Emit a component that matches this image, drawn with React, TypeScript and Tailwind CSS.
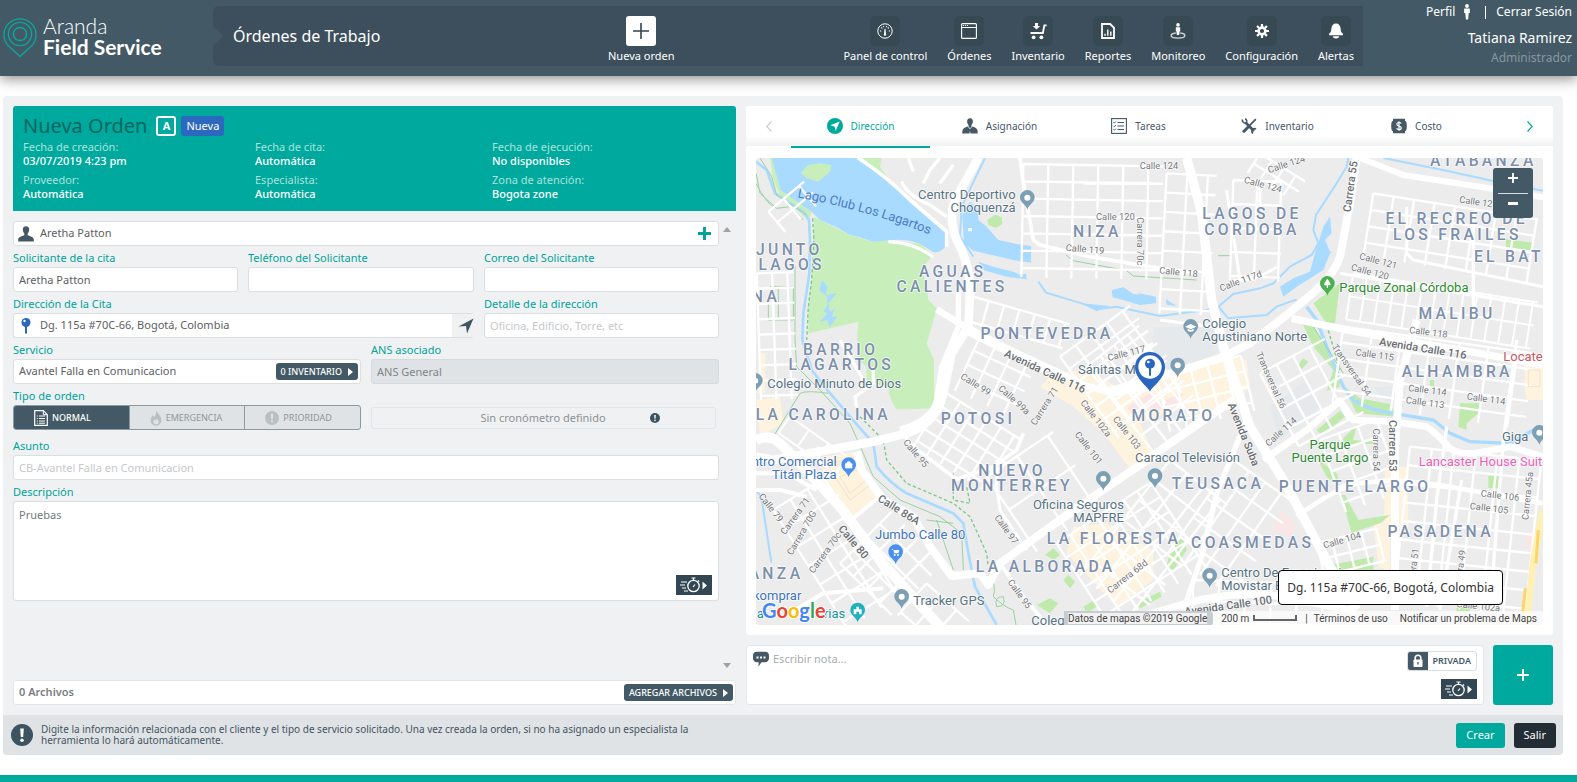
import React, { useState } from "react";

/* ------------------------------------------------------------------ icons */

type IconProps = { className?: string };

const LogoPin = () => (
  <svg viewBox="0 0 34 41" className="h-[41px] w-[34px] shrink-0" fill="none" stroke="#0ba79d" strokeWidth="1.3">
    <path d="M17 39.5 5.2 28.6A16 16 0 1 1 28.8 28.6Z" />
    <circle cx="17" cy="17" r="11.6" />
    <circle cx="17" cy="17" r="6.6" strokeWidth="1.5" />
  </svg>
);

const GaugeIcon = () => (
  <svg viewBox="0 0 16 16" className="h-4 w-4" fill="none" stroke="#fff">
    <circle cx="8" cy="8" r="7.2" strokeWidth="1" />
    <path d="M3 8h1.200M11.800 8H13M4.300 4.500l.9.900M11.700 4.500l-.9.900M6.300 3.200l.3 1M9.700 3.200l-.3 1" strokeWidth="1.100" />
    <path d="M7.500 5.800h1l.5 5.100a1.200 1.200 0 1 1-2 0Z" fill="#fff" stroke="none" />
  </svg>
);
const WindowIcon = () => (
  <svg viewBox="0 0 16 16" className="h-4 w-4" fill="none" stroke="#fff">
    <rect x=".6" y=".6" width="14.8" height="14.8" rx="1" strokeWidth="1.1" />
    <path d="M.6 4.5h14.8" />
    <path d="M2 2.5h1M4 2.5h1M6 2.5h1" />
  </svg>
);
const CartIcon = () => (
  <svg viewBox="0 0 17 17" className="h-[17px] w-[17px]" fill="#fff">
    <path d="M5 0h3v3h2.2L6.5 6.4 2.8 3H5Z" />
    <path d="M.5 9h11.6L13.600 1.500h3v1.700h-1.500L13.600 11H.5Z" />
    <circle cx="3.6" cy="14.3" r="1.9" />
    <circle cx="11.4" cy="14.3" r="1.9" />
  </svg>
);
const ReportIcon = () => (
  <svg viewBox="0 0 16 16" className="h-4 w-4" fill="none" stroke="#fff" strokeWidth="1.8">
    <path d="M2 1h8.2L14 4.8V15H2Z" />
    <path d="M5 12.8v-2M7.8 12.8V6.5M10.8 12.8V8.6" strokeWidth="1.4" />
  </svg>
);
const MonitorIcon = () => (
  <svg viewBox="0 0 16 16" className="h-4 w-4" fill="#fff">
    <circle cx="8" cy="1.9" r="1.8" />
    <path d="M5.8 4.2h4.4v4H9.600L9.200 12H6.800l-.4-3.800h-.6Z" />
    <path d="M5.8 10C2.6 10.3 1.1 11.4 1.1 12.5c0 1.5 3 2.6 6.9 2.6s6.9-1.100 6.900-2.600c0-1.100-1.500-2.200-4.700-2.500" fill="none" stroke="#cfd6da" strokeWidth="1.300" />
  </svg>
);
const GearIcon = () => (
  <svg viewBox="0 0 16 16" className="h-4 w-4" stroke="#fff" fill="none">
    <circle cx="8" cy="8" r="3.400" strokeWidth="2.600" />
    <path d="M8 1v3M8 12v3M1 8h3M12 8h3M3.050 3.050l2 2M10.900 10.900l2 2M3.050 12.950l2-2M10.900 5.050l2-2" strokeWidth="2.200" />
  </svg>
);
const BellIcon = () => (
  <svg viewBox="0 0 16 16" className="h-4 w-4" fill="#fff">
    <path d="M8 .5c2.900 0 4.300 2 4.600 5 .2 2.600.7 4 2.300 5.300v1.400H1.100v-1.400C2.700 9.500 3.200 8.100 3.400 5.500c.3-3 1.700-5 4.600-5Z" />
    <path d="M4.600 13.300h6.800c-.6 1.500-1.700 2.200-3.400 2.200s-2.800-.7-3.400-2.200Z" />
  </svg>
);
const PersonStanding = () => (
  <svg viewBox="0 0 8 16" className="h-4 w-2" fill="#fff">
    <circle cx="4" cy="2" r="1.900" />
    <path d="M1.200 4.500h5.600L6.900 9H5.700l-.6 6.500H2.900L2.300 9H1.100Z" />
  </svg>
);
const UserIcon = ({ className = "h-4 w-4" }: IconProps) => (
  <svg viewBox="0 0 16 16" className={className} fill="#465766">
    <path d="M8 .3c2.200 0 3.300 1.500 3.200 3.500-.1 1.500-.7 2.800-1.500 3.600v1.900c2.200 1 5.900 1.300 6.100 4.300v1.900H.2v-1.900c.2-3 3.900-3.300 6.100-4.300V7.400C5.500 6.600 4.900 5.300 4.800 3.800 4.700 1.800 5.800.3 8 .3Z" />
  </svg>
);
const SuitUserIcon = () => (
  <svg viewBox="0 0 16 16" className="h-4 w-4" fill="#465766">
    <path d="M8 .2c2 0 3 1.400 2.900 3.400-.1 1.500-.6 2.600-1.400 3.400v1.500L8 10.400 6.500 8.500V7C5.700 6.200 5.200 5.100 5.100 3.600 5 1.600 6 .2 8 .2Z" />
    <path d="M5.600 8.600 8 11.300l2.400-2.700c3 .9 5.100 1.900 5.300 4.900v2H8.500L8 12.700l-.5 2.800H.3v-2c.2-3 2.300-4 5.300-4.900Z" />
  </svg>
);
const CompassIcon = () => (
  <svg viewBox="0 0 16 16" className="h-4 w-4">
    <circle cx="8" cy="8" r="8" fill="#00a99d" />
    <path d="m12.700 3.400-4 9.300-1.200-4.200-4.200-1.200Z" fill="#fff" />
  </svg>
);
const ListIcon = () => (
  <svg viewBox="0 0 16 16" className="h-4 w-4" fill="none" stroke="#465766">
    <rect x=".6" y=".6" width="14.800" height="14.800" strokeWidth="1.100" />
    <path d="M6.500 4.500h6.500M6.500 8h6.500M6.500 11.500h6.500" strokeWidth="1.100" />
    <path d="m2.500 4.300.8.900L4.900 3.500M2.500 7.900l.8.900 1.600-1.700M2.500 11.400l.8.900 1.600-1.700" strokeWidth=".9" />
  </svg>
);
const ToolsIcon = () => (
  <svg viewBox="0 0 16 16" className="h-4 w-4" fill="none" stroke="#465766">
    <path d="M4.500 4.500 13 13" strokeWidth="2.600" />
    <path d="M1.500 1.500a3 3 0 0 0 3.600 3.600M4.200.7a3 3 0 0 1 .9 4.400M15 11.200a3 3 0 0 0-3.600.2M11.300 11.800a3 3 0 0 0 .6 3.700" strokeWidth="1.600" />
    <path d="M14.800 1.200 8.700 7.300" strokeWidth="1.700" />
    <path d="M7.500 8.700 2 14.200" strokeWidth="3" />
  </svg>
);
const CostIcon = () => (
  <svg viewBox="0 0 16 16" className="h-4 w-4">
    <path d="M2 .8h12v2c1.300 0 1.800 2.300 1.800 5.200s-.5 5.200-1.800 5.200v2H2v-2C.7 13.200.2 10.900.2 8S.7 2.800 2 2.800Z" fill="#465766" />
    <path d="M10.200 5.600C9.800 4.800 9 4.500 8 4.500c-1.200 0-2.200.6-2.200 1.700 0 2.500 4.500 1.200 4.500 3.700 0 1.100-1 1.700-2.300 1.700-1.100 0-2-.4-2.400-1.300M8 3.200v9.600" fill="none" stroke="#fff" strokeWidth="1.200" />
  </svg>
);
const SendIcon = () => (
  <svg viewBox="0 0 16 16" className="h-4 w-4">
    <path d="M15.500.5 9 15.500 8 8 .5 8.500Z" fill="#3f5562" />
  </svg>
);
const PushPinIcon = ({ className = "h-4 w-3" }: IconProps) => (
  <svg viewBox="0 0 12 16" className={className}>
    <circle cx="6" cy="4.500" r="4.500" fill="#2a66bd" />
    <path d="M5 8h2v7.500H5Z" fill="#2a66bd" />
    <circle cx="4.500" cy="3" r="1.200" fill="#fff" />
  </svg>
);
const DocIcon = () => (
  <svg viewBox="0 0 14 16" className="h-4 w-3.5" fill="none" stroke="#fff">
    <path d="M.7.7h8.600l4 4v10.600H.7Z" strokeWidth="1.200" />
    <path d="M9.300.7v4h4" />
    <path d="M2.800 6h1M5 6h6M2.800 8.500h1M5 8.500h6M2.800 11h1M5 11h6M2.800 13.200h1M5 13.200h6" />
  </svg>
);
const FlameIcon = () => (
  <svg viewBox="0 0 12 16" className="h-4 w-3">
    <path d="M6.500.3c.4 3 4.900 5.200 4.900 9.700 0 3.300-2.200 5.700-5.400 5.700S.6 13.300.6 10.300C.6 8 2 7 2.500 5.200c1 .6 1.400 1.300 1.500 2.200C5.400 5.600 6.300 3.200 6.500.3Z" fill="#b9c0c4" />
    <path d="M6 14.300c-1.700 0-2.800-1-2.800-2.500 0-1.200.9-1.700 1.100-2.600.9.500 1.100 1 1.200 1.500.6-.6.9-1.300.9-2.100 1.300.8 2.400 2 2.400 3.300 0 1.500-1.100 2.400-2.800 2.400Z" fill="#dfe3e6" />
  </svg>
);
const ExclaimIcon = ({ className = "h-3.5 w-3.5", disc = "#3d5361", mark = "#fff" }: { className?: string; disc?: string; mark?: string }) => (
  <svg viewBox="0 0 22 22" className={className}>
    <circle cx="11" cy="11" r="11" fill={disc} />
    <path d="M9.200 4.500h3.600l-.6 8.400H9.800Z" fill={mark} />
    <circle cx="11" cy="16.300" r="1.800" fill={mark} />
  </svg>
);
const StopwatchIcon = () => (
  <svg viewBox="0 0 28 16" className="h-4 w-7" fill="none" stroke="#fff">
    <path d="M1 5h6M0 8h5M2 11h4M4 14h4" strokeWidth="1.100" />
    <circle cx="13.500" cy="9" r="5.700" strokeWidth="1.300" />
    <path d="M11.500 1h4M13.500 1v2M18 3.500l1.200 1.200M13 10l2-2.500" strokeWidth="1.200" />
    <path d="M22.500 4.500v8l4.500-4Z" fill="#fff" stroke="none" />
  </svg>
);
const ChatIcon = () => (
  <svg viewBox="0 0 16 16" className="h-4 w-4">
    <path d="M4 .8h8c2.500 0 4 1.500 4 3.900v2.600c0 2.400-1.500 3.900-4 3.900H8.500L5.500 15.500l.2-4.300H4c-2.500 0-4-1.500-4-3.900V4.700C0 2.300 1.500.8 4 .8Z" fill="#465766" />
    <path d="M3.500 5.500h2v2h-2ZM7 5.500h2v2H7ZM10.500 5.500h2v2h-2Z" fill="#fff" />
  </svg>
);
const LockIcon = () => (
  <svg viewBox="0 0 12 14" className="h-3.5 w-3">
    <path d="M3.200 6V4a2.800 2.800 0 0 1 5.600 0v2" fill="none" stroke="#fff" strokeWidth="1.600" />
    <rect x="1.500" y="5.500" width="9" height="7.500" rx=".8" fill="#fff" />
    <path d="M6 8v2.500" stroke="#435a66" strokeWidth="1.300" />
  </svg>
);
const Caret = () => (
  <svg viewBox="0 0 5 8" className="h-2 w-[5px]">
    <path d="M0 0 5 4 0 8Z" fill="#fff" />
  </svg>
);
const Chevron = ({ left, color }: { left?: boolean; color: string }) => (
  <svg viewBox="0 0 6 11" className="h-[11px] w-1.5" fill="none" stroke={color} strokeWidth="1.200">
    <path d={left ? "M5.500.5.800 5.500l4.700 5" : "M.5.500l4.700 5L.5 10.500"} />
  </svg>
);
const PlusIcon = ({ className, color, weight }: { className: string; color: string; weight: number }) => (
  <svg viewBox="0 0 16 16" className={className} stroke={color} strokeWidth={weight}>
    <path d="M8 0v16M0 8h16" />
  </svg>
);

/* -------------------------------------------------------------------- map */

/* Streets of one neighbourhood: two sets of parallel lines, turned by a given angle. */
function Blocks({ x, y, w, h, a, dx, dy, sw = 7 }: { x: number; y: number; w: number; h: number; a: number; dx: number; dy: number; sw?: number }) {
  let d = "";
  for (let i = 0; i <= w; i += dx) d += `M${i} 0V${h}`;
  for (let j = 0; j <= h; j += dy) d += `M0 ${j}H${w}`;
  return <path d={d} transform={`translate(${x} ${y}) rotate(${a})`} strokeWidth={sw} />;
}

function Pin({ x, y, color, hole = true, children }: { x: number; y: number; color: string; hole?: boolean; children?: React.ReactNode }) {
  return (
    <g transform={`translate(${x} ${y})`}>
      <path d="M0 36C-4 20-22 16-22-1A22 22 0 0 1 22-1C22 16 4 20 0 36Z" fill={color} />
      {hole && <circle r="9" fill="#fff" />}
      {children}
    </g>
  );
}

type Label = [string, number, number, number?];

const AREAS: Label[] = [
  ["JUNTO", 148, 346], ["LAGOS", 155, 391], ["NA", 78, 487], ["AGUAS", 638, 412], ["CALIENTES", 636, 457],
  ["NIZA", 1072, 292], ["PONTEVEDRA", 921, 596], ["BARRIO", 302, 646], ["LAGARTOS", 304, 691],
  ["LAGOS DE", 1536, 238], ["CORDOBA", 1536, 284], ["ATABANZA", 2230, 79], ["EL RECREO DE", 2150, 253], ["LOS FRAILES", 2152, 299],
  ["EL BATAN", 2348, 367], ["MALIBU", 2151, 538], ["ALHAMBRA", 2152, 712],
  ["LA CAROLINA", 250, 841], ["POTOSI", 714, 853], ["NUEVO", 816, 1009], ["MONTERREY", 816, 1054],
  ["LA FLORESTA", 1122, 1211], ["LA ALBORADA", 917, 1297], ["ANZA", 108, 1317], ["MORATO", 1300, 844],
  ["TEUSACA", 1434, 1046], ["PUENTE LARGO", 1845, 1055], ["COASMEDAS", 1538, 1223], ["PASADENA", 2102, 1192],
];

const STREETS: Label[] = [
  ["Calle 124", 1257, 87], ["Calle 120", 1126, 240], ["Calle 119", 1035, 331, 5], ["Carrera 70c", 1196, 304, 90],
  ["Calle 117", 1160, 643, -14], ["Calle 99", 705, 736, 32], ["Calle 124", 1568, 137, 15], ["Calle 124", 1640, 76, -18], ["Calle 118", 1315, 400, 6],
  ["Calle 117d", 1503, 426, -20], ["Calle 126", 2215, 190, 8], ["Calle 121", 1914, 366, 15], ["Calle 120", 1889, 399, 15],
  ["Calle 118", 2065, 580, 7], ["Calle 115", 1904, 648, 8], ["Calle 114", 2062, 754, 7], ["Calle 114", 2238, 780, 8], ["Transversal 54", 1832, 692, 55],
  ["Transversal 56", 1590, 722, 66], ["Calle 95", 525, 942, 50], ["Calle 99a", 820, 782, 42], ["Carrera 71", 916, 800, -58],
  ["Calle 102a", 1065, 837, 52], ["Calle 103", 1158, 880, 52], ["Calle 101", 1043, 926, 52], ["Calle 79", 90, 1105, 52], ["Carrera 71", 168, 1130, -54],
  ["Carrera 70G", 188, 1180, -60], ["Carrera 70c", 258, 1240, -54], ["Calle 97", 796, 1170, 54], ["Calle 95", 836, 1364, 54],
  ["Carrera 68d", 1164, 1312, -38], ["Calle 114", 1625, 878, -42], ["Carrera 54", 1906, 930, 90], ["Calle 113", 2055, 791, 8],
  ["Calle 106", 2280, 1070, 7], ["Calle 105", 2247, 1108, 7], ["Carrera 45a", 2366, 1068, -84], ["Calle 104", 1807, 1204, -16],
  ["Carrera 51", 2022, 1290, -82], ["Carrera 49", 2162, 1295, -82], ["Calle 102a", 2215, 1402, 6],
];

const AVENUES: Label[] = [
  ["Avenida Calle 116", 914, 697, 25], ["Avenida Calle 116", 2048, 628, 9], ["Carrera 55", 1834, 140, -82],
  ["Calle 86A", 475, 1112, 32], ["Calle 80", 338, 1208, 50], ["Avenida Suba", 1508, 884, 68], ["Carrera 53", 1956, 917, 90], ["Avenida Calle 100", 1465, 1400, -8],
];

function StreetMap() {
  return (
    <svg viewBox="48 54 2361 1401" preserveAspectRatio="xMidYMid slice" className="block h-full w-full font-['Roboto',sans-serif]" role="img" aria-label="Mapa de Bogotá">
      <rect x="-400" y="-400" width="3400" height="2400" fill="#ececec" />

      {/* shaded districts */}
      <path d="M1240 560 1430 560 1430 660 1240 700ZM1590 800 1700 720 1740 800 1620 900ZM1900 740 2000 740 1980 840Z" fill="#e6e9ec" />
      <g fill="#fdf3df">
        <path d="M940 700 1040 690 1130 740 1300 690 1440 640 1520 660 1530 740 1480 790 1330 800 1200 850 1250 960 1180 1000 1090 880 1000 800 900 740Z" />
        <path d="M1330 720H1530L1500 780 1340 830ZM250 950 340 935 420 1060 340 1140 250 1040ZM48 780 120 770 130 850 60 890Z" />
        <path d="M60 640 76 640V760H50ZM1000 1160 1100 1150 1240 1230 1240 1320 1130 1400 980 1240ZM1935 980H2005V1180H1950V1290H1930Z" />
        <path d="M2350 660 2409 640V760H2360ZM2350 720H2409V780H2360ZM1900 1150 1945 1150 1950 1290 1915 1280Z" />
      </g>
      <path d="M1596 1170 1625 1110 1670 1160 1650 1190ZM1160 800 1230 760 1260 800 1180 830ZM2350 1180 2380 1170V1230H2365ZM1240 790 1330 760 1310 800 1250 810Z" fill="#fae6e6" />

      {/* parks */}
      <g fill="#c8efbb">
        <path d="M90 54H100L125 150 215 215 205 240 120 165 100 120ZM345 54H425L420 82Q445 110 455 140L430 130 390 90Z" />
        <path d="M222 232 240 240 330 285 400 305 450 300 540 312 580 345 545 385 560 440 565 480 590 505 575 560 560 610 582 660V805L470 808Q448 780 445 745L380 720V680L355 660 350 620 355 545 205 580V500L215 420Z" />
      </g>
      <g fill="#bfeaac">
        <path d="M742 240 765 224 785 232 787 252 768 264 745 255ZM1720 490 1800 430 1785 550 1760 552ZM1685 545 1720 560 1795 690 1800 740 1760 752 1780 690 1720 620Z" />
        <path d="M2298 298 2378 308V332L2298 322ZM1670 680 1690 655 1705 665 1685 688ZM1760 720H1800L1850 820 1970 830 1950 792 1860 775 1800 730Z" />
        <path d="M1730 870 1800 812 1815 830 1745 886ZM1805 900 1850 855 1840 900 1905 905V912H1800ZM1735 960 1790 1000 1800 1040 1760 1010ZM1805 1065H1815L1855 1140 1950 1125 1920 1150 1835 1178 1825 1145Z" />
        <path d="M1770 1275 1900 1250V1320H1780ZM2160 790H2220V815L2180 850V870L2155 860ZM2245 1008H2280V1045H2245ZM2070 720H2082V740H2070ZM2150 1402H2190V1415H2150Z" />
        <path d="M915 1245 940 1225 960 1245 940 1260ZM970 1320 985 1305 1005 1325 990 1345ZM890 1395 930 1375 955 1390 930 1420ZM1030 1400 1060 1382 1070 1400 1040 1420ZM1190 1390 1260 1355 1265 1370 1200 1405ZM1290 1230 1330 1190 1340 1230 1300 1290 1280 1280Z" />
      </g>

      {/* water */}
      <g fill="#a9daff">
        <path d="M95 54H345L400 88 430 110 480 150 560 225 618 280V315Q605 340 580 336L540 312Q500 296 460 300L400 305 360 292 330 285 290 262 240 240 215 215 150 170 122 150 108 100Z" />
        <path d="M667 225 690 185 712 205 715 240 740 260 775 300 830 312 873 318V368L820 360 700 332 672 310ZM715 365 760 380 820 395 840 405 858 400 860 418 800 410 730 390Z" />
        <path d="M1115 450 1150 442 1180 462 1240 468 1248 490 1200 495 1150 480 1118 472ZM1025 490 1110 498 1070 514ZM1278 478 1310 498 1280 494ZM1190 458 1248 470V488Z" />
        <path d="M1770 230 1775 280 1755 300 1770 335H1778L1770 340 1750 390 1670 440 1630 470 1620 440 1660 415 1710 395 1725 340 1750 260Z" />
        <path d="M246 420 262 440 258 465 290 460 265 490 270 515 285 505 275 530 292 530 268 562 262 540 240 545 262 520 250 515 262 495 262 470 238 450Z" />
      </g>
      <path d="M182 98 205 75 240 70 275 75 270 95 235 125 200 115Z" fill="#c8efbb" />
      <path d="M684 264H696V274H684Z" fill="#fff" />
      <g fill="none" stroke="#a9daff" strokeWidth="6">
        <path d="M48 65 80 90 105 160 190 215 207 240 210 300 208 400 190 520 187 600 215 690 262 750 330 830 400 910 410 980Q450 1030 500 1060L640 1120 670 1150 685 1240 705 1340 770 1455" strokeWidth="8" />
        <path d="M735 54 665 200 660 290 700 350 M895 425 918 458 1025 490 1070 508 1130 500 1260 528 1400 510 1435 500 1480 462 1560 445 1600 430 1650 380 1715 345 1735 310 1720 270 1728 225 1790 130 1820 80 1825 54" />
        <path d="M1435 500 1465 535 1580 525 1610 500 1670 478" />
        <path d="M1700 500 1730 540 1760 620 1810 740 1840 780Q1890 812 1960 820L2080 840 2130 880 2190 905 2310 910 2380 870" strokeWidth="10" />
        <path d="M48 1055Q66 1060 70 1110L94 1268M1930 54 2120 92 2290 130 2409 152" />
      </g>

      {/* footpaths */}
      <g fill="none" stroke="#9ad2a1" strokeWidth="3">
        <path d="M60 54 95 110 110 165 200 225M48 100 60 160 110 205 150 200 190 240M48 130Q80 190 100 200M90 440H160V540H85V490H160M115 440V540M165 380V600L170 680 240 750 330 850 370 940 400 1010 480 1080 600 1130 665 1180 670 1290" />
        <path d="M978 345 1000 362 1160 392 1180 408 1370 420M1434 347H1475M265 760Q200 750 180 760L100 890M590 1140 640 1290M750 1300Q770 1340 760 1370 790 1400 820 1410L828 1455M770 1400Q760 1370 790 1370 800 1400 770 1400M1720 560 1810 700M560 1140 640 1150" />
        <path d="M218 235 222 300 215 420 205 500 200 600M360 830 430 900 440 960 500 1030 640 1090 690 1130 740 1240 745 1280M640 1000 640 1080 690 1090 680 1040M1760 555 1800 690" strokeDasharray="10 7" strokeWidth="4" stroke="#7cc98a" />
      </g>

      {/* local streets */}
      <g fill="none" stroke="#fff">
        <Blocks x={850} y={72} w={420} h={340} a={1} dx={75} dy={52} />
        <Blocks x={1280} y={100} w={150} h={420} a={3} dx={62} dy={58} />
        <Blocks x={50} y={400} w={110} h={380} a={-2} dx={46} dy={46} />
        <Blocks x={85} y={215} w={140} h={80} a={-40} dx={60} dy={42} />
        <Blocks x={700} y={470} w={300} h={75} a={16} dx={48} dy={75} />
        <Blocks x={720} y={590} w={190} h={180} a={25} dx={54} dy={46} />
        <Blocks x={620} y={760} w={260} h={190} a={32} dx={48} dy={42} />
        <Blocks x={960} y={650} w={260} h={300} a={-36} dx={58} dy={46} />
        <Blocks x={1040} y={680} w={200} h={330} a={-38} dx={52} dy={66} />
        <Blocks x={1250} y={710} w={260} h={170} a={-14} dx={52} dy={48} />
        <Blocks x={1900} y={160} w={500} h={190} a={9} dx={62} dy={50} />
        <Blocks x={1840} y={400} w={560} h={140} a={9} dx={42} dy={70} sw={6} />
        <Blocks x={1810} y={560} w={580} h={230} a={8} dx={88} dy={48} />
        <Blocks x={1480} y={120} w={150} h={300} a={2} dx={72} dy={72} />
        <Blocks x={1560} y={40} w={160} h={70} a={32} dx={42} dy={36} />
        <Blocks x={1560} y={700} w={220} h={250} a={-28} dx={56} dy={62} />
        <Blocks x={1740} y={900} w={180} h={230} a={-20} dx={60} dy={50} />
        <Blocks x={2010} y={920} w={400} h={470} a={6} dx={66} dy={56} />
        <Blocks x={1730} y={1210} w={190} h={100} a={-14} dx={46} dy={50} />
        <Blocks x={1290} y={960} w={220} h={440} a={38} dx={64} dy={76} />
        <Blocks x={1480} y={960} w={230} h={340} a={35} dx={58} dy={70} />
        <Blocks x={950} y={1210} w={340} h={300} a={-33} dx={48} dy={52} />
        <Blocks x={740} y={1010} w={240} h={270} a={-34} dx={110} dy={120} />
        <Blocks x={100} y={1110} w={190} h={420} a={-32} dx={60} dy={66} />
        <Blocks x={300} y={1270} w={220} h={220} a={-45} dx={56} dy={56} />
        <Blocks x={560} y={1330} w={170} h={130} a={42} dx={60} dy={58} />
        <Blocks x={1360} y={1320} w={420} h={140} a={2} dx={78} dy={62} />
        <Blocks x={150} y={830} w={220} h={60} a={35} dx={70} dy={60} sw={6} />
        <path d="M300 600 370 720M350 800 345 770 400 730V680M445 305Q530 310 580 352M505 54 520 95M600 54 570 90 550 130M640 74 600 130M485 125Q500 165 570 195L620 230" strokeWidth="10" />
        <path d="M1235 130H1030M1560 200V130M770 960 770 1040 780 1110 860 1230M1460 150 1500 420M1480 420Q1540 430 1610 380" strokeWidth="9" />
      </g>
      <g fill="none" stroke="#f4e2c8" strokeWidth="3">
        <path d="M262 975 330 1080 390 1035 345 950ZM290 975 345 950M300 1010 350 990 380 1020 330 1060ZM2365 690H2400V740H2365Z" />
      </g>

      {/* main roads */}
      <g fill="none" stroke="#fff" strokeLinejoin="round">
        <path d="M355 54Q440 110 510 180L620 275V320M840 54 850 130 880 300 900 315 1050 350 1260 385 1370 400" strokeWidth="11" />
        <path d="M715 54 645 180Q622 240 655 310 692 380 690 460L685 560 635 640 610 760Q590 850 500 880L400 905 180 945 100 960 48 950" strokeWidth="26" />
        <path d="M655 450V560L605 680 590 780Q575 840 480 868" strokeWidth="16" />
        <path d="M590 508 655 548 700 572 800 625 940 690 1030 735 1120 760 1240 740" strokeWidth="20" />
        <path d="M680 570 800 630 920 690" strokeWidth="26" />
        <path d="M1850 54 1830 190 1800 350Q1780 410 1700 475L1640 525 1530 610 1440 655 1230 720 1100 755" strokeWidth="24" />
        <path d="M1655 535 1830 572 1980 600 2190 635 2409 675" strokeWidth="22" />
        <path d="M1340 54 1385 220 1415 480 1450 620 1490 740 1530 860 1630 1020 1770 1280 1850 1410" strokeWidth="28" />
        <path d="M1860 54 1990 105 2230 142 2409 172" strokeWidth="18" />
        <path d="M1260 540 1420 560M2000 200 2000 340 2020 360 2409 440M1800 400 2409 500" strokeWidth="9" />
        <path d="M2030 540 1980 720 1965 920V1410" strokeWidth="24" />
        <path d="M2165 1020 2100 1410M2200 250 2200 540M2330 600 2290 900 2250 1410M2120 860 2090 1080 2060 1400" strokeWidth="10" />
        <path d="M1570 960 1700 870 1800 782 1840 840 1960 845 2060 860Q2100 890 2130 925 2170 950 2230 935L2310 920 2409 950" strokeWidth="20" />
        <path d="M1670 1130Q1780 1050 1850 1030L1960 1020 2100 1035 2409 1090" strokeWidth="14" />
        <path d="M48 900 Q90 880 120 910 L180 970 300 1100 420 1260 500 1350 600 1460" strokeWidth="30" />
        <path d="M350 935 365 990 430 1080 520 1130 570 1220 635 1308 720 1300 745 1335 780 1270 1000 1110 1200 975 1290 910 1480 780" strokeWidth="24" />
        <path d="M1520 840 1430 1060 1385 1250 1330 1410" strokeWidth="16" />
        <path d="M1230 1422 1340 1390Q1480 1350 1630 1370L1850 1415" strokeWidth="22" />
        <path d="M340 1135 430 1060M48 1000 140 1000 230 1050M48 1050 120 1050 200 1070M430 1345 250 1360 150 1420" strokeWidth="12" />
        <path d="M480 870 520 920 650 1018 760 980 830 930 850 880M780 1270 850 1370 920 1455" strokeWidth="11" />
      </g>
      <path d="M2409 1110 2380 1260 2360 1455" fill="none" stroke="#fff1b5" strokeWidth="20" />
      <path d="M2356 1345 2348 1420M2395 1170 2388 1270" fill="none" stroke="#fbd667" strokeWidth="9" />

      {/* captions */}
      <g paintOrder="stroke" stroke="#fff" strokeOpacity=".8" strokeLinejoin="round">
        <g fontSize="47" fontWeight="500" fill="#7c8fac" strokeWidth="5" textAnchor="middle" className="tracking-[10px]">
          {AREAS.map(([t, x, y]) => (
            <text key={t + x} x={x} y={y}>{t}</text>
          ))}
        </g>
        <g fontSize="28" fill="#75787b" strokeWidth="4" textAnchor="middle">
          {STREETS.map(([t, x, y, a = 0]) => (
            <text key={t + x + y} transform={`translate(${x} ${y}) rotate(${a})`} dy={a ? 6 : 0}>{t}</text>
          ))}
        </g>
        <g fontSize="33" fontWeight="500" fill="#6a6e72" strokeWidth="4" textAnchor="middle">
          {AVENUES.map(([t, x, y, a = 0]) => (
            <text key={t + x + y} transform={`translate(${x} ${y}) rotate(${a})`} dy={a ? 8 : 0}>{t}</text>
          ))}
        </g>
        <g fontSize="39" fill="#587383" strokeWidth="5">
          <text x="827" y="177" textAnchor="end">Centro Deportivo</text>
          <text x="827" y="215" textAnchor="end">Choquenzá</text>
          <text x="82" y="743">Colegio Minuto de Dios</text>
          <text x="1014" y="701">Sánitas M</text>
          <text x="1387" y="563">Colegio</text>
          <text x="1387" y="602">Agustiniano Norte</text>
          <text x="1152" y="1107" textAnchor="end">Oficina Seguros</text>
          <text x="1152" y="1146" textAnchor="end">MAPFRE</text>
          <text x="1185" y="966">Caracol Televisión</text>
          <text x="520" y="1395">Tracker GPS</text>
          <text x="874" y="1455">Colegi</text>
          <text x="1444" y="1311">Centro De Experiencia</text>
          <text x="1444" y="1350">Movistar El</text>
          <text x="2286" y="902">Giga</text>
        </g>
        <g fontSize="39" fill="#3f73be" strokeWidth="5">
          <text x="290" y="977" textAnchor="end">Centro Comercial</text>
          <text x="290" y="1016" textAnchor="end">Titán Plaza</text>
          <text x="405" y="1196">Jumbo Calle 80</text>
          <text x="184" y="1379" textAnchor="end">Foxkomprar</text>
        </g>
        <g fontSize="39" fill="#1c8f9c" strokeWidth="5">
          <text x="50" y="1433">a</text>
          <text x="316" y="1433" textAnchor="end">rias</text>
        </g>
        <g fontSize="39" fill="#2f8a32" strokeWidth="5">
          <text x="1798" y="456">Parque Zonal Córdoba</text>
          <text x="1770" y="926" textAnchor="middle">Parque</text>
          <text x="1770" y="965" textAnchor="middle">Puente Largo</text>
        </g>
        <text x="2290" y="663" fontSize="39" fill="#c45a66" strokeWidth="5">Locatel</text>
        <text x="2036" y="978" fontSize="39" fill="#ea5fb4" strokeWidth="5">Lancaster House Suites</text>
      </g>
      <path id="lake" d="M172 172Q400 215 590 292" fill="none" />
      <text fontSize="39" fill="#4b7cc6"><textPath href="#lake">Lago Club Los Lagartos</textPath></text>

      {/* places */}
      {[[862, 173], [1352, 560], [1313, 676], [1090, 1016], [1245, 1008], [485, 1370], [1409, 1307], [2398, 878], [46, 722]].map(([x, y]) => (
        <Pin key={x} x={x} y={y} color="#7d9fb3" hole={x !== 1352} />
      ))}
      <path d="M1335 560 1352 552 1369 560 1352 568ZM1343 566V573Q1352 578 1361 573V566L1352 571Z" fill="#fff" />
      <Pin x={326} y={975} color="#4a90f0" hole={false}><path d="M-10-4H10V9H-10ZM-5-4V-8Q0-13 5-8V-4" fill="#fff" stroke="#fff" strokeWidth="2" /></Pin>
      <Pin x={467} y={1236} color="#4a90f0" hole={false}><path d="M-13-9H-8L-4 4H8L11-6H-6Z" fill="#fff" /><circle cx="-3" cy="9" r="3" fill="#fff" /><circle cx="7" cy="9" r="3" fill="#fff" /></Pin>
      <Pin x={353} y={1411} color="#1fb2bd" hole={false}><path d="M-12 12V-3H-4V-11H4V-3H12V12H4V4H-4V12Z" fill="#fff" /></Pin>
      <Pin x={1762} y={431} color="#4caf50" hole={false}><path d="M0-15Q14 4 8 5H2V12H-2V5H-8Q-14 4 0-15Z" fill="#fff" /></Pin>

      {/* order location */}
      <g transform="translate(1230 681)">
        <path d="M0 74C-8 56-45 36-45 0A45 45 0 0 1 45 0C45 36 8 56 0 74Z" fill="#2a66bd" />
        <circle r="35" fill="#fff" />
        <circle cy="-10" r="15" fill="#2a66bd" />
        <path d="M-3 0H3V26H-3Z" fill="#2a66bd" />
        <circle cx="-5" cy="-15" r="4" fill="#fff" />
      </g>
    </svg>
  );
}

/* ----------------------------------------------------------------- pieces */

const NAV = [
  { label: "Panel de control", Icon: GaugeIcon },
  { label: "Órdenes", Icon: WindowIcon },
  { label: "Inventario", Icon: CartIcon },
  { label: "Reportes", Icon: ReportIcon },
  { label: "Monitoreo", Icon: MonitorIcon },
  { label: "Configuración", Icon: GearIcon },
  { label: "Alertas", Icon: BellIcon },
];

const TABS = [
  { label: "Dirección", Icon: CompassIcon },
  { label: "Asignación", Icon: SuitUserIcon },
  { label: "Tareas", Icon: ListIcon },
  { label: "Inventario", Icon: ToolsIcon },
  { label: "Costo", Icon: CostIcon },
];

const FACTS = [
  ["Fecha de creación:", "03/07/2019 4:23 pm"],
  ["Fecha de cita:", "Automática"],
  ["Fecha de ejecución:", "No disponibles"],
  ["Proveedor:", "Automática"],
  ["Especialista:", "Automática"],
  ["Zona de atención:", "Bogota zone"],
];

const field = "h-[25px] w-full min-w-0 rounded-[3px] border border-[#dcdfe1] bg-white px-[5px] text-[11px] text-[#5d6063] outline-none placeholder:text-[#c6c9cb]";
const caption = "flex h-[21px] items-center pt-0.5 text-[11px] leading-none text-[#00a398]";
const darkButton = "flex shrink-0 items-center rounded-[3px] bg-[#435a66] font-medium text-white";

function Header() {
  return (
    <header className="relative flex h-[76px] items-start bg-[#435a66] text-white shadow-[0_3px_12px_rgba(40,30,30,0.5)]">
      <a href="#inicio" className="flex w-[213px] shrink-0 items-center gap-1.5 pt-4 pl-[3px] font-['Lato',sans-serif]">
        <LogoPin />
        <span className="flex flex-col">
          <span className="text-[21px] leading-5 font-light">Aranda</span>
          <span className="text-[21px] leading-[22px] font-bold">Field Service</span>
        </span>
      </a>
      <div className="relative mt-1.5 flex h-[60px] min-w-0 flex-1 items-start rounded-l-md bg-[#3d4f5d] pr-[9px]">
        <svg viewBox="0 0 10 20" className="absolute top-5 left-0 h-5 w-2.5"><path d="M0 0 10 10 0 20Z" fill="#435a66" /></svg>
        <h1 className="w-[395px] shrink-0 self-center pl-5 text-base">Órdenes de Trabajo</h1>
        <button className="flex flex-col items-center pt-2.5">
          <span className="flex h-[30px] w-[30px] items-center justify-center rounded-[3px] bg-white"><PlusIcon className="h-4 w-4" color="#33444f" weight={1.6} /></span>
          <span className="mt-1 text-[11px] leading-3">Nueva orden</span>
        </button>
        <nav className="ml-auto flex gap-5 pt-2.5">
          {NAV.map(({ label, Icon }) => (
            <a key={label} href="#nav" className="flex flex-col items-center">
              <span className="flex h-[30px] w-[30px] items-center justify-center rounded-[5px] bg-[#374a54]"><Icon /></span>
              <span className="mt-1 text-[11px] leading-3 whitespace-nowrap">{label}</span>
            </a>
          ))}
        </nav>
      </div>
      <div className="flex w-[214px] shrink-0 flex-col items-end pt-1 pr-[5px]">
        <div className="flex items-center text-xs leading-4">
          <a href="#perfil" className="flex items-center gap-2">Perfil <PersonStanding /></a>
          <span className="mr-2.5 ml-3.5 h-[13px] w-px bg-white" />
          <a href="#salir">Cerrar Sesión</a>
        </div>
        <div className="mt-2 text-sm leading-5">Tatiana Ramirez</div>
        <div className="mt-0.5 text-xs leading-4 text-[#8796a0]">Administrador</div>
      </div>
    </header>
  );
}

function OrderSummary() {
  return (
    <section className="h-[105px] rounded-t-[3px] bg-[#00a99d] px-2.5 pt-2.5">
      <div className="flex h-5 items-center gap-[5px]">
        <h2 className="mr-1 text-xl leading-5 text-[#00665f]">Nueva Orden</h2>
        <span className="flex h-5 w-5 items-center justify-center rounded-[3px] border-2 border-white text-[11px] font-bold text-white">A</span>
        <span className="flex h-5 items-center rounded-[3px] bg-[#2d68bf] px-[5px] text-[11px] text-white">Nueva</span>
      </div>
      <dl className="mt-1 grid grid-cols-[232fr_237fr_234fr] gap-y-[5px] text-[11px] leading-[14px]">
        {FACTS.map(([k, v]) => (
          <div key={k}>
            <dt className="text-[#a8e3de]">{k}</dt>
            <dd className="font-medium text-white">{v}</dd>
          </div>
        ))}
      </dl>
    </section>
  );
}

function OrderForm() {
  const [kind, setKind] = useState("NORMAL");
  const kinds = [
    { name: "NORMAL", icon: <DocIcon /> },
    { name: "EMERGENCIA", icon: <FlameIcon /> },
    { name: "PRIORIDAD", icon: <ExclaimIcon disc="#b9c0c4" mark="#dfe3e6" /> },
  ];
  return (
    <form className="relative mt-2.5 flex-1 pr-[17px]" onSubmit={(e) => e.preventDefault()}>
      <div className="flex h-[25px] items-center rounded-[3px] border border-[#dcdfe1] bg-white pr-[7px] pl-1">
        <UserIcon />
        <input aria-label="Cliente" defaultValue="Aretha Patton" className="ml-1.5 min-w-0 flex-1 text-[11px] text-[#5d6063] outline-none" />
        <button aria-label="Agregar cliente"><PlusIcon className="h-[13px] w-[13px]" color="#00a398" weight={3.6} /></button>
      </div>

      <div className="grid grid-cols-[225fr_226fr_235fr] gap-x-2.5">
        <div>
          <label htmlFor="solicitante" className={caption}>Solicitante de la cita</label>
          <input id="solicitante" defaultValue="Aretha Patton" className={field} />
        </div>
        <div>
          <label htmlFor="telefono" className={caption}>Teléfono del Solicitante</label>
          <input id="telefono" className={field} />
        </div>
        <div>
          <label htmlFor="correo" className={caption}>Correo del Solicitante</label>
          <input id="correo" className={field} />
        </div>
        <div className="col-span-2">
          <label htmlFor="direccion" className={caption}>Dirección de la Cita</label>
          <div className="flex h-[25px] items-center rounded-[3px] border border-r-0 border-[#dcdfe1] bg-white pl-1.5">
            <PushPinIcon />
            <input id="direccion" defaultValue="Dg. 115a #70C-66, Bogotá, Colombia" className="ml-2 min-w-0 flex-1 text-[11px] text-[#5d6063] outline-none" />
            <button aria-label="Ubicar" className="flex h-full w-[22px] items-center justify-end bg-[#eff1f3]"><SendIcon /></button>
          </div>
        </div>
        <div>
          <label htmlFor="detalle" className={caption}>Detalle de la dirección</label>
          <input id="detalle" placeholder="Oficina, Edificio, Torre, etc" className={field} />
        </div>
      </div>

      <div className="grid grid-cols-2 gap-x-2.5">
        <div>
          <label htmlFor="servicio" className={caption}>Servicio</label>
          <div className="flex h-[25px] items-center rounded-[3px] border border-[#dcdfe1] bg-white pr-0.5 pl-[5px]">
            <input id="servicio" defaultValue="Avantel Falla en Comunicacion" className="min-w-0 flex-1 text-[11px] text-[#5d6063] outline-none" />
            <button className={`${darkButton} h-[17px] gap-1.5 px-[5px] text-[9px]`}>0 INVENTARIO <Caret /></button>
          </div>
        </div>
        <div>
          <label htmlFor="ans" className={caption}>ANS asociado</label>
          <input id="ans" defaultValue="ANS General" disabled className="h-[25px] w-full rounded-[3px] border border-[#d6dadd] bg-[#dfe3e6] px-[5px] text-[11px] text-[#808588]" />
        </div>
        <div>
          <span className={caption}>Tipo de orden</span>
          <div role="group" aria-label="Tipo de orden" className="flex h-[25px] divide-x divide-[#8b9aa2] overflow-hidden rounded-[3px] border border-[#8b9aa2] bg-[#dfe3e6]">
            {kinds.map(({ name, icon }) => (
              <button
                key={name}
                type="button"
                aria-pressed={kind === name}
                onClick={() => setKind(name)}
                className={`flex flex-1 items-center gap-1 pl-5 text-[9px] ${kind === name ? "bg-[#435a66] font-medium text-white" : "text-[#8f979c]"}`}
              >
                {icon} {name}
              </button>
            ))}
          </div>
        </div>
        <div className="mt-[23px] mr-[3px] flex h-[22px] items-center rounded-[3px] border border-[#e3e6e8] text-[11px] text-[#8d9194]">
          <span className="flex-1 pl-16 text-center">Sin cronómetro definido</span>
          <ExclaimIcon className="mr-[55px] h-2.5 w-2.5" />
        </div>
      </div>

      <div className="mt-1">
        <label htmlFor="asunto" className={caption}>Asunto</label>
        <input id="asunto" placeholder="CB-Avantel Falla en Comunicacion" className={field} />
        <label htmlFor="descripcion" className={caption}>Descripción</label>
        <div className="relative h-[100px]">
          <textarea id="descripcion" defaultValue="Pruebas" className="block h-full w-full resize-none rounded-[3px] border border-[#dcdfe1] bg-white px-[5px] py-1.5 text-[11px] leading-[14px] text-[#76797c] outline-none" />
          <button aria-label="Plantillas" className="absolute right-[7px] bottom-1.5 flex h-5 w-9 items-center justify-center bg-[#324654]"><StopwatchIcon /></button>
        </div>
      </div>

      <svg viewBox="0 0 8 5" className="absolute top-1.5 right-[5px] h-[5px] w-2"><path d="M4 0 8 5H0Z" fill="#a2a2a2" /></svg>
      <svg viewBox="0 0 8 5" className="absolute right-[5px] bottom-0.5 h-[5px] w-2"><path d="M0 0h8L4 5Z" fill="#a2a2a2" /></svg>
    </form>
  );
}

function LocationCard() {
  const [tab, setTab] = useState("Dirección");
  return (
    <section className="rounded-[3px] bg-white">
      <div className="flex h-10 items-stretch rounded-t-[3px] bg-linear-to-b from-white from-75% to-[#f0f2f2]">
        <button aria-label="Anterior" className="flex w-[45px] items-center justify-center"><Chevron left color="#c9cdd0" /></button>
        <div role="tablist" className="flex min-w-0 flex-1">
          {TABS.map(({ label, Icon }) => (
            <button
              key={label}
              role="tab"
              aria-selected={tab === label}
              onClick={() => setTab(label)}
              className={`-mb-0.5 flex flex-1 items-center justify-center gap-2 border-b-2 text-[10px] ${tab === label ? "border-[#00a99d] text-[#00a99d]" : "border-transparent text-[#47586a]"}`}
            >
              <Icon /> {label}
            </button>
          ))}
        </div>
        <button aria-label="Siguiente" className="flex w-[67px] items-center justify-end pr-5"><Chevron color="#00a99d" /></button>
      </div>
      <div className="p-2.5 pt-3">
        <div className="relative h-[467px] overflow-hidden rounded-[3px]">
          <StreetMap />
          <div className="absolute top-2.5 right-2.5 flex h-[50px] w-10 flex-col items-center rounded-[3px] bg-[#435a66]">
            <button aria-label="Acercar" className="flex w-full flex-1 items-center justify-center pb-1"><PlusIcon className="h-2.5 w-2.5" color="#fff" weight={3} /></button>
            <span className="h-px w-[30px] bg-[#d7dde0]" />
            <button aria-label="Alejar" className="flex w-full flex-1 items-center justify-center pb-1"><span className="h-[3px] w-2.5 bg-white" /></button>
          </div>
          <div className="absolute right-10 bottom-5 flex h-[35px] items-center rounded-[4px] border border-black bg-white px-2 text-xs text-[#333]">
            Dg. 115a #70C-66, Bogotá, Colombia
          </div>
          <a href="#google" aria-label="Google" className="absolute bottom-0 left-1.5">
            <svg viewBox="0 0 64 26" className="h-[26px] w-16" fontSize="20" fontWeight="700" stroke="#fff" strokeWidth="2" paintOrder="stroke">
              <text x="0" y="19" className="font-['Lato',sans-serif]">
                <tspan fill="#4285f4">G</tspan><tspan fill="#ea4335">o</tspan><tspan fill="#fbbc05">o</tspan><tspan fill="#4285f4">g</tspan><tspan fill="#34a853">l</tspan><tspan fill="#ea4335">e</tspan>
              </text>
            </svg>
          </a>
          <div className="absolute right-0 bottom-0 flex h-3.5 items-center bg-white/70 pr-1.5 font-['Roboto',sans-serif] text-[10px] text-[#444]">
            <span className="rounded-r bg-[#c5cdd1] pr-1.5 pl-1"><span className="bg-[#f2f2f2]">Datos de mapas ©2019 Google</span></span>
            <span className="ml-2">200 m</span>
            <span className="mr-2 ml-1 h-1.5 w-11 border-2 border-t-0 border-[#666]" />
            <span className="mr-1.5">|</span>
            <a href="#terminos">Términos de uso</a>
            <a href="#error" className="ml-3">Notificar un problema de Maps</a>
          </div>
        </div>
      </div>
    </section>
  );
}

function NoteBox() {
  return (
    <div className="mt-2.5 flex h-[60px] gap-[9px]">
      <div className="flex min-w-0 flex-1 items-start rounded-[3px] border border-[#e4e7e9] bg-white pr-1.5 pl-1.5">
        <span className="mt-[5px]"><ChatIcon /></span>
        <textarea aria-label="Nota" placeholder="Escribir nota..." className="ml-1 h-full min-w-0 flex-1 resize-none pt-[5px] text-[11px] leading-4 text-[#5d6063] outline-none placeholder:text-[#a9adb0]" />
        <div className="flex flex-col items-end gap-2 pt-[5px]">
          <button className="flex h-5 items-center overflow-hidden rounded-[3px] border border-[#dcdfe1] text-[9px] font-semibold text-[#435a66]">
            <span className="flex h-5 w-5 items-center justify-center bg-[#435a66]"><LockIcon /></span>
            <span className="px-[5px]">PRIVADA</span>
          </button>
          <button aria-label="Plantillas" className="flex h-5 w-9 items-center justify-center bg-[#324654]"><StopwatchIcon /></button>
        </div>
      </div>
      <button aria-label="Agregar nota" className="flex w-[60px] items-center justify-center rounded-[3px] bg-[#00a99d]"><PlusIcon className="h-3 w-3" color="#fff" weight={2.6} /></button>
    </div>
  );
}

export default function App() {
  return (
    <div className="min-h-screen bg-white font-['Noto_Sans',sans-serif] text-[11px]">
      <Header />
      <main className="mt-5 mr-3.5 ml-[3px] overflow-hidden rounded-[4px] bg-[#eff1f3]">
        <div className="grid grid-cols-[723fr_807fr] gap-2.5 p-2.5">
          <div className="flex min-w-0 flex-col">
            <OrderSummary />
            <OrderForm />
            <div className="mt-2.5 flex h-[25px] items-center justify-between rounded-[3px] border border-[#e4e7e9] bg-white pr-0.5 pl-[5px] text-[11px] font-semibold text-[#7a7d80]">
              0 Archivos
              <button className={`${darkButton} h-[17px] gap-1.5 px-[5px] text-[9px]`}>AGREGAR ARCHIVOS <Caret /></button>
            </div>
          </div>
          <div className="min-w-0">
            <LocationCard />
            <NoteBox />
          </div>
        </div>
        <footer className="flex h-10 items-center bg-[#dfe3e6] pr-[7px] pl-2">
          <ExclaimIcon className="h-[22px] w-[22px] shrink-0" />
          <p className="ml-2 max-w-[670px] text-[10px] leading-[11px] text-[#45545f]">
            Digite la información relacionada con el cliente y el tipo de servicio solicitado. Una vez creada la orden, si no ha asignado un especialista la herramienta lo hará automáticamente.
          </p>
          <button className="ml-auto h-[25px] rounded-[3px] bg-[#00a99d] px-2.5 text-[11px] text-white">Crear</button>
          <button className="ml-[9px] h-[25px] rounded-[3px] bg-[#222d36] px-2.5 text-[11px] text-white">Salir</button>
        </footer>
      </main>
      <div className="mt-5 h-[7px] bg-[#00a99d]" />
    </div>
  );
}
